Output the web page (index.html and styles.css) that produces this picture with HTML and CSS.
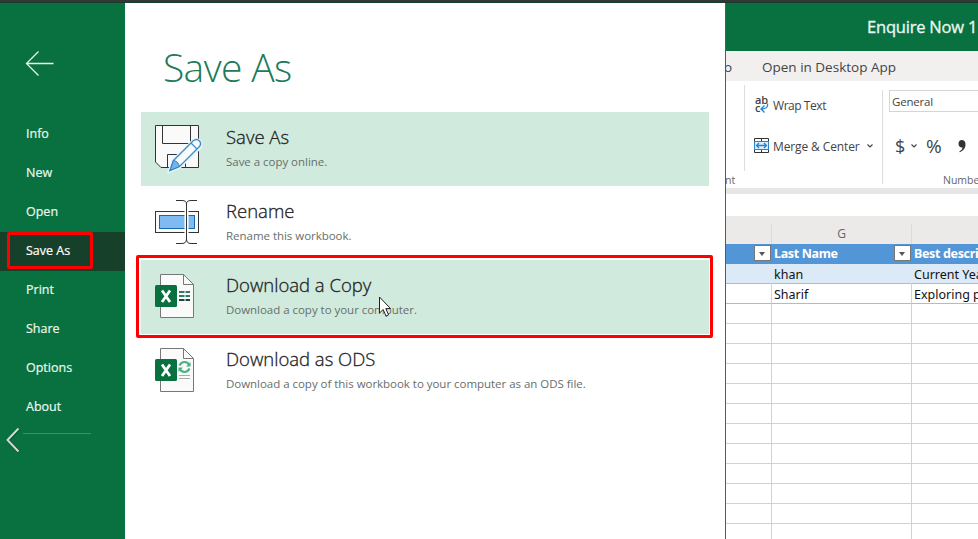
FILE: index.html
```html
<!DOCTYPE html>
<html lang="en">
<head>
<meta charset="utf-8">
<title>Save As</title>
<link rel="stylesheet" href="styles.css">
</head>
<body>
<div class="topline"></div>
<div class="app">
  <nav class="nav">
    <svg class="back" width="30" height="26" viewBox="0 0 30 26"><path d="M28.500 12.500H1.500M13.500 .5L1.500 12.500L13.500 24.500"/></svg>
    <ul class="menu">
      <li><span>Info</span></li>
      <li><span>New</span></li>
      <li><span>Open</span></li>
      <li class="active"><span>Save As</span></li>
      <li><span>Print</span></li>
      <li><span>Share</span></li>
      <li><span>Options</span></li>
      <li><span>About</span></li>
    </ul>
    <div class="rule"></div>
    <div class="mark mark-nav"></div>
    <svg class="chevron" width="18" height="28" viewBox="0 0 18 28"><path class="shade" d="M15 3L4 14.500L15 26"/><path d="M14.500 2.500L3.500 14L14.500 25.500"/></svg>
  </nav>

  <main class="panel">
    <h1><span>Save As</span></h1>
    <section class="options">
      <article class="option on">
        <svg class="icon" width="48" height="50" viewBox="0 0 48 50">
          <path class="doc dark" d="M.5 1.500H43.500V43.500H6L.5 38Z"/>
          <path class="line" d="M7.500 1.500V19.500H35.500V1.500M12.500 43.500V30.500H30.500V43.500"/>
          <path class="halo" d="M18 37L38 17.500Q42 15 45 18Q47 21 44 24L24 43L15 46.500Z"/>
          <path class="pen" d="M18.500 36.500L38 17Q41.500 14 44.500 17Q47 20 44 23L24.500 42.500L15 46.500Z"/>
          <path class="tip" d="M18.500 36.500Q23 37 24.500 42.500L15 46.500Z"/>
          <path class="penline" d="M36 19L42 25"/>
        </svg>
        <div class="copy"><h2><span class="a1">Save As</span></h2><p><span class="b1">Save a copy online.</span></p></div>
      </article>
      <article class="option">
        <svg class="icon" width="48" height="50" viewBox="0 0 48 50">
          <rect class="doc dark" x=".5" y="11.500" width="43" height="21"/>
          <rect class="blue" x="4.500" y="15.500" width="35" height="13"/>
          <path class="gap" d="M31.500 5V40"/>
          <path class="line" d="M21 .5H27Q31.500 .5 31.500 4V39Q31.500 43.500 27 43.500H21M42 .5H36Q31.500 .5 31.500 4M31.500 39Q31.500 43.500 36 43.500H42"/>
        </svg>
        <div class="copy"><h2><span class="a2">Rename</span></h2><p><span class="b2">Rename this workbook.</span></p></div>
      </article>
      <article class="option on">
        <svg class="icon" width="48" height="50" viewBox="0 0 48 50">
          <path class="doc" d="M5.500 .5H28.500L38.500 10.500V43.500H5.500Z"/><path class="fold" d="M28.500 .5V10.500H38.500"/>
          <path class="c1" d="M24 18H29.500M30.500 18H35M24 22H29.500M30.500 22H35"/><path class="c2" d="M24 26H29.500M30.500 26H35"/>
          <rect class="tile" y="11" width="22" height="22" rx="1.500"/>
          <path class="x" d="M7 16.500L15 28M15 16.500L7 28"/>
        </svg>
        <div class="copy"><h2><span class="a3">Download a Copy</span></h2><p><span class="b3">Download a copy to your computer.</span></p></div>
      </article>
      <article class="option">
        <svg class="icon" width="48" height="50" viewBox="0 0 48 50">
          <path class="doc" d="M5.500 .5H28.500L38.500 10.500V43.500H5.500Z"/><path class="fold" d="M28.500 .5V10.500H38.500"/>
          <path class="loop" d="M24.500 17.500Q26 14 29.500 14Q33 14 34.500 17.500M34.500 20.500Q33 24 29.500 24Q26 24 24.500 20.500"/>
          <path class="looptip" d="M35.500 14V18.500H31ZM23.500 24V19.500H28Z"/>
          <path class="grey" d="M24 27.500H35M24 30.500H35"/>
          <rect class="tile" y="11" width="22" height="22" rx="1.500"/>
          <path class="x" d="M7 16.500L15 28M15 16.500L7 28"/>
        </svg>
        <div class="copy"><h2><span class="a4">Download as ODS</span></h2><p><span class="b4">Download a copy of this workbook to your computer as an ODS file.</span></p></div>
      </article>
    </section>
    <div class="mark mark-option"></div>
    <svg class="cursor" width="14" height="22" viewBox="0 0 14 22"><path d="M1.500 1V17L5.200 13.500L8 20L10.600 18.900L7.800 12.600H12.500Z"/></svg>
  </main>

  <div class="sheet">
    <header class="titlebar"><span>Enquire Now 1</span></header>
    <div class="tabs"><span class="o">o</span><span class="desk">Open in Desktop App</span></div>
    <div class="ribbon">
      <div class="group g0"><small>nt</small></div>
      <div class="group g1">
        <div class="cmd wrap">
          <svg width="16" height="18" viewBox="0 0 16 18"><text><tspan x="1" y="8">ab</tspan><tspan x="1" y="16">c</tspan></text><path class="arrow" d="M13.500 7.500Q14.500 13 7.500 13M10.500 9.500L7 13L10.500 16.500"/></svg>
          <span>Wrap Text</span>
        </div>
        <div class="cmd merge">
          <svg width="16" height="16" viewBox="0 0 16 16"><path class="line" d="M.5 .5H14.500V14.500H.5ZM7.500 .5V4M7.500 11V14.500"/><rect class="mid" x=".5" y="3.500" width="14" height="8"/><path class="arrow" d="M2.500 7.500H12.500M5 5L2.500 7.500L5 10M10 5L12.500 7.500L10 10"/></svg>
          <span>Merge &amp; Center</span>
          <svg class="caret" width="6" height="4" viewBox="0 0 6 4"><path d="M.5 .5L3 3L5.500 .5"/></svg>
        </div>
      </div>
      <div class="group g2">
        <div class="format"><span>General</span></div>
        <div class="symbols"><span class="dollar">$</span><svg class="caret" width="6" height="4" viewBox="0 0 6 4"><path d="M.5 .5L3 3L5.500 .5"/></svg><span class="pct">%</span><svg class="comma" width="8" height="13" viewBox="0 0 8 13"><path d="M3.700 0C6.200 0 7.500 2 7.500 4.200C7.500 8 5.200 11 1.500 12.300V11.300C3.600 10 4.500 8.800 4.500 7.400C2.200 7.800 .5 6 .5 3.700C.5 1.500 1.800 0 3.700 0Z"/></svg></div>
        <small>Number</small>
      </div>
    </div>
    <div class="band"></div>
    <div class="formula"></div>
    <div class="grid">
      <div class="row heads"><i></i><b>G</b><i></i></div>
      <div class="row fields"><div><u></u></div><div><span>Last Name</span><u></u></div><div><span>Best describes</span></div></div>
      <div class="row tint"><div></div><div><span>khan</span></div><div><span>Current Year</span></div></div>
      <div class="row last"><div></div><div><span>Sharif</span></div><div><span>Exploring programs</span></div></div>
      <div class="row"><div></div><div></div><div></div></div>
      <div class="row"><div></div><div></div><div></div></div>
      <div class="row"><div></div><div></div><div></div></div>
      <div class="row"><div></div><div></div><div></div></div>
      <div class="row"><div></div><div></div><div></div></div>
      <div class="row"><div></div><div></div><div></div></div>
      <div class="row"><div></div><div></div><div></div></div>
      <div class="row"><div></div><div></div><div></div></div>
      <div class="row"><div></div><div></div><div></div></div>
      <div class="row"><div></div><div></div><div></div></div>
      <div class="row"><div></div><div></div><div></div></div>
      <div class="row"><div></div><div></div><div></div></div>
    </div>
  </div>
</div>
</body>
</html>
```
FILE: styles.css
```css
* { box-sizing: border-box; }
html, body { margin: 0; height: 539px; overflow: hidden; }
body { font-family: "Open Sans", "Noto Sans", sans-serif; background: #fff; white-space: nowrap; }
h1, h2, p, ul { margin: 0; padding: 0; font-weight: 400; }
svg { display: block; flex: none; fill: none; }
.topline { height: 3px; background: #343637; border-bottom: 1px solid #173d2b; }
.app { display: flex; height: 536px; }

.nav { position: relative; width: 125px; flex: none; background: #09703f; color: #e9f7ef; }
.back { margin: 48px 0 0 25px; stroke: #e6f5ec; stroke-width: 1.3; }
.menu { list-style: none; margin-top: 38px; }
.menu li { height: 39px; padding-left: 26px; font-size: 12.5px; line-height: 37px; -webkit-text-stroke: .2px currentColor; }
.menu .active { background: #17402b; color: #fff; }
.rule { height: 1px; margin: 6px 34px 0 23px; background: #3b8e66; }
.mark { position: absolute; border: 3px solid #f00; border-radius: 2px; }
.mark-nav { left: 7px; top: 229px; width: 86px; height: 37px; }
.chevron { position: absolute; left: 4px; top: 423px; stroke: #d5d8d6; stroke-width: 2; }
.chevron .shade { stroke: #075331; stroke-width: 3; }

.panel { position: relative; width: 601px; flex: none; border-right: 1px solid #24764e; padding-left: 16px; }
h1 { height: 109px; padding: 38px 0 0 22px; font-size: 39px; line-height: 52px; font-weight: 300; letter-spacing: -.65px; color: #217a58; }
.option { display: flex; width: 568px; height: 74px; padding: 12px 0 0 14px; }
.option.on { background: #d0ebde; }
.icon { width: 48px; height: 50px; margin-top: 2px; }
.option:first-child .icon { margin-top: 0; }
.copy { margin-left: 23px; }
h2 { font-size: 18.5px; line-height: 26px; color: #222; font-weight: 300; -webkit-text-stroke: .3px #222; }
.copy p { margin-top: 2px; font-size: 11.5px; line-height: 20px; letter-spacing: -.03px; color: #686e6b; }
.mark-option { left: 11px; top: 252px; width: 577px; height: 83px; }
.cursor { position: absolute; left: 253px; top: 293px; fill: #fff; stroke: #222; stroke-width: 1; }
.doc { fill: #fafafa; stroke: #777; }
.dark { stroke: #333; }
.line { stroke: #333; }
.halo { fill: #fff; stroke: #e8f4f6; stroke-width: 4; }
.pen { fill: #fafafa; stroke: #3b8fcd; stroke-width: 1.4; }
.tip { fill: #72b5ed; stroke: #2e82c4; }
.penline { stroke: #3b8fcd; stroke-width: 1.3; }
.blue { fill: #7fbbf0; stroke: #1669ae; }
.gap { stroke: #fff; stroke-width: 4; }
.fold { stroke: #777; }
.c1 { stroke: #347b67; stroke-width: 2; }
.c2 { stroke: #1c4838; stroke-width: 2; }
.tile { fill: #09703f; }
.x { stroke: #fff; stroke-width: 2.8; }
.loop { stroke: #48b183; stroke-width: 2; }
.looptip { fill: #48b183; }
.grey { stroke: #aaa; }

.sheet { flex: 1; min-width: 0; overflow: hidden; color: #444; }
.titlebar { height: 48px; padding-left: 141px; background: #09703f; color: #e8f7ee; font-size: 16.5px; line-height: 47px; letter-spacing: -.2px; -webkit-text-stroke: .35px #e8f7ee; }
.tabs { display: flex; height: 30px; background: #f1f0ef; font-size: 13.5px; line-height: 32px; }
.o { width: 37px; margin-left: -2px; }
.desk { margin-left: 1px; }
.ribbon { display: flex; height: 107px; }
.group { position: relative; flex: none; font-size: 12px; }
.group small { font-size: 10.5px; line-height: 14px; color: #666; }
.g0 { width: 19px; height: 86px; margin-top: 4px; border-right: 1px solid #ddd; }
.g0 small { display: block; margin: 88px 0 0 -1px; }
.g1 { width: 138px; height: 94px; margin-top: 9px; padding: 6px 0 0 9px; border-right: 1px solid #ddd; }
.cmd { display: flex; align-items: center; height: 18px; gap: 3px; letter-spacing: -.12px; }
.wrap { letter-spacing: -.45px; }
.merge { margin-top: 23px; gap: 4px; }
.merge span { margin-left: -1px; }
.cmd text { font: 600 11px "Open Sans", sans-serif; letter-spacing: -.2px; fill: #444; }
.arrow { stroke: #2684cc; stroke-width: 1.3; }
.mid { fill: #d9eefb; stroke: #2684cc; }
.caret { stroke: #444; stroke-width: 1.2; }
.merge .caret { margin-left: 3px; }
.g2 { width: 200px; padding: 9px 0 0 6px; }
.format { height: 22px; padding-left: 2px; border: 1px solid #d5d5d5; font-size: 11.5px; line-height: 21px; letter-spacing: -.2px; }
.symbols { display: flex; align-items: center; height: 30px; margin-top: 19px; padding-left: 6px; font-size: 18px; line-height: 30px; }
.dollar { width: 16px; }
.pct { margin-left: 9px; width: 20px; font-size: 19px; }
.comma { margin-left: 12px; fill: #333; }
.g2 small { display: block; margin: 12px 0 0 54px; }
.band { height: 6px; background: #e6e6e6; }
.formula { height: 22px; }

.row { display: grid; grid-template-columns: 46px 140px 160px; height: 20px; }
.row > * { border-right: 1px solid #d2d2d2; border-bottom: 1px solid #d2d2d2; }
.heads { height: 28px; background: #ebeae9; }
.row.heads > * { margin-top: 8px; border-bottom: 0; border-color: #dadada; font: 400 12px/19px "Open Sans", sans-serif; text-align: center; color: #666; }
.row > div { display: flex; justify-content: space-between; overflow: hidden; padding-left: 2px; font: 12.5px/21px "Noto Sans", sans-serif; color: #111; }
.fields { background: #5396d7; }
.row.fields > div { border-color: #5396d7; color: #fff; font-weight: 700; line-height: 20px; font-size: 12.5px; letter-spacing: -.35px; }
.fields u { position: relative; width: 17px; height: 16px; margin: 1px 0; background: #fff; border: 1px solid #777; margin-left: auto; }
.fields u::after { content: ""; position: absolute; left: 4px; top: 6px; border: 3.500px solid transparent; border-top: 4px solid #555; border-bottom: 0; }
.row.tint > div { background: #dce9f6; border-right-color: #dce9f6; border-bottom-color: #9cc1e2; }
.row.last > div { border-bottom-color: #9cc1e2; }
```
